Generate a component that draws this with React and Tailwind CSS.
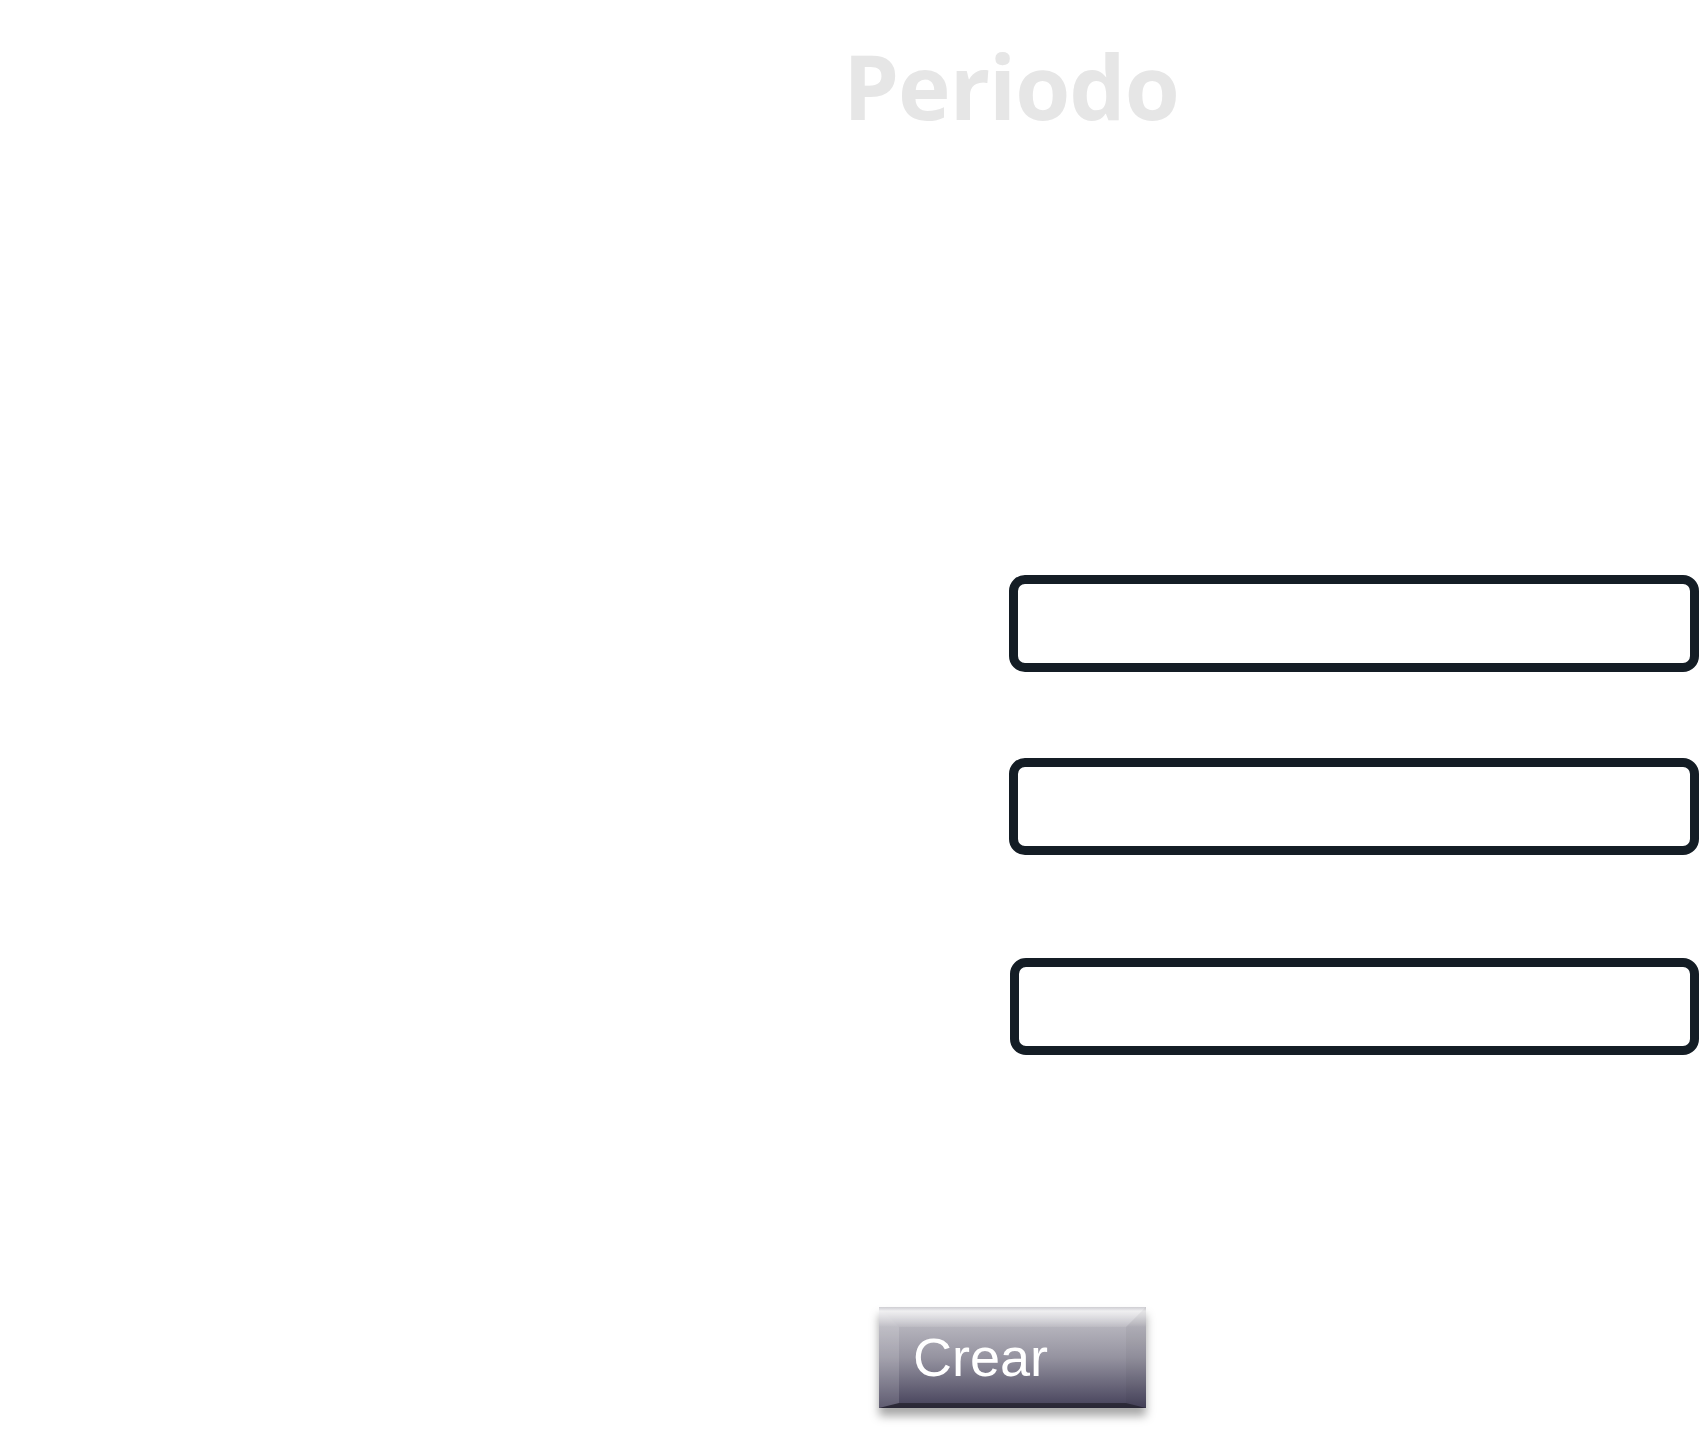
export default function App() {
  return (
    <div className="w-[1700px] h-[1449px] bg-white flex flex-col" style={{ fontFamily: '"Open Sans", "Noto Sans", sans-serif' }}>
      <div className="mt-[41px] flex justify-center pl-[322px]">
        <h1 className="text-[89px] leading-none font-bold text-[#e6e6e6] tracking-[-1px]">Periodo</h1>
      </div>
      <div className="mt-[445px] flex flex-col">
        <div className="flex">
          <div className="w-[1009px]"></div>
          <input className="w-[690px] h-[97px] border-[9px] border-[#141d25] rounded-[16px] bg-white outline-none" />
        </div>
        <div className="flex mt-[86px]">
          <div className="w-[1009px]"></div>
          <input className="w-[690px] h-[97px] border-[9px] border-[#141d25] rounded-[16px] bg-white outline-none" />
        </div>
        <div className="flex mt-[103px]">
          <div className="w-[1010px]"></div>
          <input className="w-[689px] h-[97px] border-[9px] border-[#141d25] rounded-[16px] bg-white outline-none" />
        </div>
      </div>
      <div className="mt-[252px] flex pl-[879px]">
        <button
          className="w-[267px] h-[101px] border-t-[20px] border-l-[20px] border-r-[20px] border-b-[5px] border-t-[rgba(255,255,255,0.1)] border-l-[rgba(255,255,255,0.14)] border-r-[rgba(0,0,0,0.04)] border-b-[rgba(0,0,0,0.4)] bg-origin-border bg-[linear-gradient(to_bottom,rgba(255,255,255,0)_0px,rgba(255,255,255,0.7)_4px,rgba(255,255,255,0)_20px),linear-gradient(to_bottom,#c9c8ce,#9593a0_50%,#45415a)] shadow-[0_8px_9px_rgba(0,0,0,0.35)] flex items-start"
        >
          <span className="pl-[14px] pt-[3px] text-white text-[54px] leading-none" style={{ fontFamily: '"Liberation Sans", Arial, sans-serif' }}>Crear</span>
        </button>
      </div>
    </div>
  );
}
